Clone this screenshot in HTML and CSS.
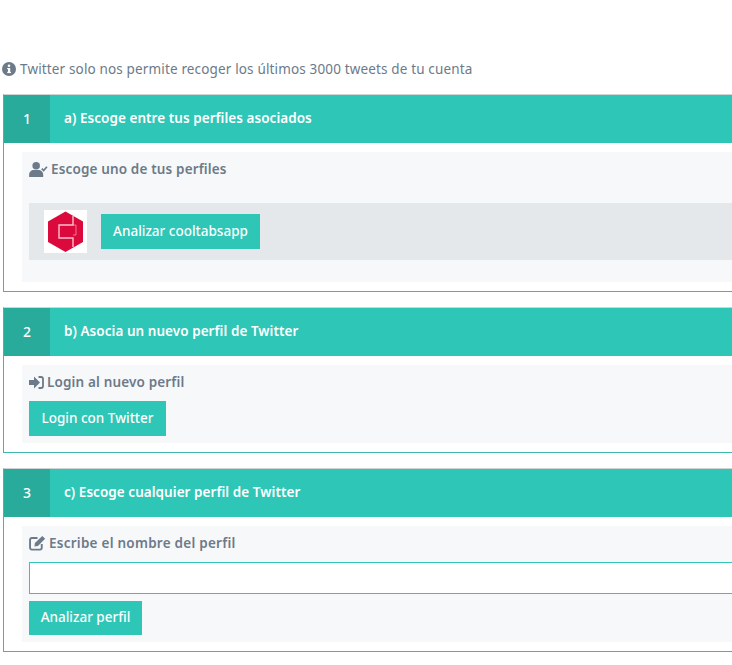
FILE: index.html
```html
<!DOCTYPE html>
<html lang="es">
<head>
<meta charset="utf-8">
<title>Perfiles</title>
<link rel="stylesheet" href="styles.css">
</head>
<body>
<div class="page">
  <p class="notice">
    <svg class="info" viewBox="1 1 14 14"><circle cx="8" cy="8" r="7" fill="#6c7a89"/><rect x="7" y="7" width="2.200" height="4.500" fill="#fff"/><rect x="6.200" y="10.800" width="3.800" height="1.300" fill="#fff"/><rect x="6.200" y="7" width="2.400" height="1.200" fill="#fff"/><circle cx="8" cy="4.700" r="1.300" fill="#fff"/></svg>
    <span>Twitter solo nos permite recoger los últimos 3000 tweets de tu cuenta</span>
  </p>

  <section class="panel panel-one">
    <header class="panel-head"><div class="num">1</div><h2>a) Escoge entre tus perfiles asociados</h2></header>
    <div class="well well-one">
      <h3 class="label">
        <svg class="ico ico-user" viewBox="0 0 20 16"><circle cx="7.500" cy="4" r="4" fill="#6c7a89"/><path d="M0 16v-2.500C0 10.500 2.500 8.500 5 8.500h5c2.500 0 5 2 5 5V16z" fill="#6c7a89"/><path d="M13.500 7l2 2 3.500-4" fill="none" stroke="#6c7a89" stroke-width="1.800"/></svg>
        <span>Escoge uno de tus perfiles</span>
      </h3>
      <div class="profile">
        <div class="logo">
          <svg viewBox="0 0 43 43"><path d="M21.500 1.500L39 11.500v20.500L21.500 42 4 32V11.500z" fill="#dc0a3c"/><path d="M29 6V15H15V28H29V37" fill="none" stroke="#f8c0cd" stroke-width="1.400"/><path d="M29 15H32V25H29" fill="none" stroke="#f8c0cd" stroke-width="1" opacity=".6"/></svg>
        </div>
        <button class="btn btn-profile" type="button">Analizar cooltabsapp</button>
      </div>
    </div>
  </section>

  <section class="panel panel-two">
    <header class="panel-head"><div class="num">2</div><h2>b) Asocia un nuevo perfil de Twitter</h2></header>
    <div class="well well-two">
      <h3 class="label">
        <svg class="ico ico-login" viewBox="0 0 15 13"><path d="M0 4h5V.5l6 6-6 6V9H0z" fill="#6c7a89"/><path d="M9.500 1H12c1.300 0 2 .8 2 2v7c0 1.200-.7 2-2 2H9.500" fill="none" stroke="#6c7a89" stroke-width="1.800"/></svg>
        <span>Login al nuevo perfil</span>
      </h3>
      <button class="btn btn-login" type="button">Login con Twitter</button>
    </div>
  </section>

  <section class="panel panel-three">
    <header class="panel-head"><div class="num">3</div><h2>c) Escoge cualquier perfil de Twitter</h2></header>
    <div class="well well-three">
      <h3 class="label label-wide">
        <svg class="ico ico-edit" viewBox="0 0 16 15"><path d="M12 8.500V12c0 1-.7 1.700-1.700 1.700H2.700C1.700 13.700 1 13 1 12V4.500c0-1 .7-1.700 1.700-1.700H8" fill="none" stroke="#6c7a89" stroke-width="1.800"/><path d="M5.500 7.500L12.500.8l2.700 2.700-6.800 6.800-3.300.6z" fill="#6c7a89"/></svg>
        <span>Escribe el nombre del perfil</span>
      </h3>
      <input class="field" type="text" aria-label="Nombre del perfil">
      <button class="btn btn-analyze" type="button">Analizar perfil</button>
    </div>
  </section>
</div>
</body>
</html>
```
FILE: styles.css
```css
* { box-sizing: border-box; }
html, body { margin: 0; padding: 0; height: 665px; overflow: hidden; background: #fff; }
body { font-family: "Noto Sans", "Open Sans", sans-serif; font-size: 14px; color: #6c7a89; }
.page { width: 800px; padding: 59px 0 0 3px; }
.notice { display: flex; align-items: center; gap: 4px; margin: 0 0 16px -1px; height: 19px; font-size: 13.500px; letter-spacing: .15px; color: #6c7a89; }
.info { width: 14px; height: 14px; flex: none; }
.panel { border: 1px solid #3fb8ab; border-top-color: #cfd4d4; width: 790px; margin-bottom: 15px; }
.panel-head { display: flex; height: 48px; background: #2ec6b6; color: #fff; align-items: center; }
.num { width: 46px; height: 48px; padding-bottom: 2px; background: #29ab9c; display: flex; align-items: center; justify-content: center; font-size: 14px; font-weight: 500; }
.panel-head h2 { margin: 0 0 2px 14px; font-size: 13.500px; font-weight: 600; letter-spacing: .05px; }
.well { margin: 9px 0 9px 18px; background: #f7f8fa; padding: 0 0 0 7px; }
.well-one { height: 130px; }
.well-two { height: 78px; }
.well-three { height: 116px; }
.label { display: flex; align-items: center; gap: 3px; margin: 0; height: 36px; padding-bottom: 2px; font-size: 13.500px; font-weight: 600; letter-spacing: .15px; color: #6c7a89; }
.label-wide { letter-spacing: .25px; }
.ico { flex: none; }
.ico-user { width: 19px; height: 15px; }
.ico-login { width: 15px; height: 13px; }
.ico-edit { width: 17px; height: 16px; }
.profile { display: flex; align-items: center; height: 57px; margin-top: 15px; background: #e5e8ea; padding-left: 15px; gap: 14px; }
.logo { width: 43px; height: 43px; background: #fff; flex: none; }
.logo svg { display: block; width: 43px; height: 43px; }
.btn { display: block; border: 0; background: #2ec6b6; color: #fff; font: inherit; font-size: 13.500px; font-weight: 500; padding: 0 0 2px; text-align: center; }
.btn-profile { width: 159px; height: 35px; }
.btn-login { width: 137px; height: 35px; }
.btn-analyze { width: 113px; height: 34px; margin-top: 7px; }
.field { display: block; width: 780px; height: 32px; border: 1px solid #2ec6b6; background: #fff; padding: 0 8px; }
```
